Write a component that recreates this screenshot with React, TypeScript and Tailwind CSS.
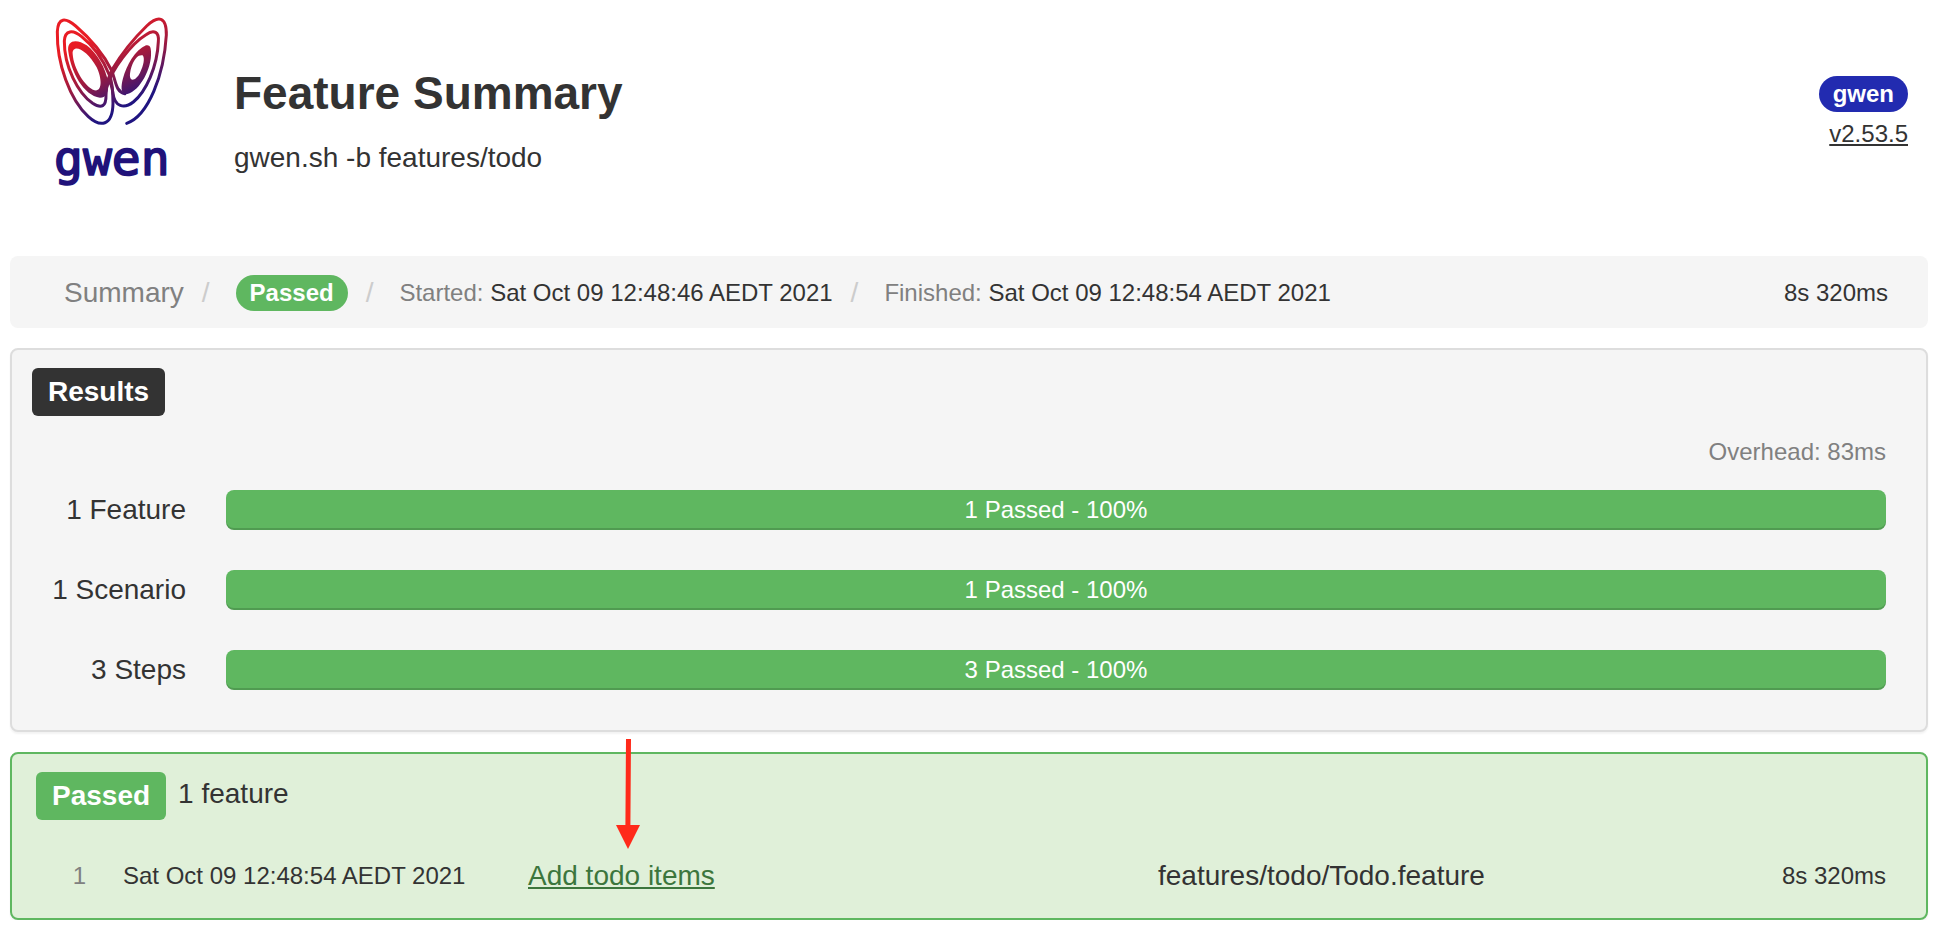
import React from "react";

function Logo() {
  return (
    <svg viewBox="0 0 450 600" className="h-[200px] w-[150px] shrink-0" role="img" aria-label="gwen logo">
      <defs>
        <linearGradient id="wing" gradientUnits="userSpaceOnUse" x1="120" y1="130" x2="225" y2="335">
          <stop offset="0" stopColor="#e91c24" />
          <stop offset="0.5" stopColor="#9c1a40" />
          <stop offset="1" stopColor="#1f1480" />
        </linearGradient>
      </defs>
      <g fill="none" stroke="url(#wing)" strokeWidth="9" strokeLinecap="round" strokeLinejoin="round">
        <path d="M260 370C325 348 372 225 379 105C380 48 354 46 320 78C285 112 245 160 217 208C200 240 200 260 198 285C199 320 184 327 158 310C115 280 72 200 73 123C75 90 98 88 125 110C160 138 190 180 208 225C218 250 218 270 219 310C218 380 180 382 145 350C90 300 50 190 52 95C54 52 76 52 107 78C150 115 192 165 214 210C228 240 225 275 255 281" />
        <path d="M200 262C214 208 275 130 318 104C342 87 358 96 355 125C352 200 318 275 280 306C252 328 224 320 219 280C216 262 212 248 206 236" />
      </g>
      <path fill="url(#wing)" fillRule="evenodd" d="M85 155C79 118 112 116 140 136C172 160 197 205 204 245C205 275 200 293 180 293C130 286 93 215 85 155ZM98 162C101 207 135 260 163 271C188 276 186 235 170 202C150 165 122 143 106 146C99 148 97 154 98 162Z" />
      <path fill="url(#wing)" fillRule="evenodd" d="M333 155C336 205 300 272 262 282C240 285 243 258 249 235C260 195 285 150 318 136C329 133 333 142 333 155ZM308 166C286 160 269 205 270 230C273 247 290 238 300 218C311 196 315 174 308 166Z" />
      <text x="42" y="525" fontSize="144" fontFamily="DejaVu Sans Mono, monospace" fill="#20127a" stroke="#20127a" strokeWidth="5" strokeLinejoin="round">gwen</text>
    </svg>
  );
}

const results = [
  { label: "1 Feature", value: "1 Passed - 100%" },
  { label: "1 Scenario", value: "1 Passed - 100%" },
  { label: "3 Steps", value: "3 Passed - 100%" },
];

function Slash() {
  return <span className="text-[28px] text-[#cccccc]" aria-hidden="true">/</span>;
}

export default function App() {
  return (
    <div className="bg-white pr-3 pl-[10px] font-['Liberation_Sans',Arial,sans-serif] text-[28px] leading-10 text-[#333333]">
      <header className="flex h-64 items-start pr-5 pl-[30px]">
        <Logo />
        <div className="ml-11 flex-1 pt-[66px]">
          <h1 className="text-[46px] leading-[54px] font-bold">Feature Summary</h1>
          <p className="mt-[18px]">gwen.sh -b features/todo</p>
        </div>
        <div className="flex flex-col items-end pt-[76px] text-[24px]">
          <span className="flex h-9 items-center rounded-full bg-[#222bb0] px-[14px] font-bold text-white">gwen</span>
          <a href="#version" className="mt-[2px] underline decoration-2 underline-offset-2">v2.53.5</a>
        </div>
      </header>

      <ul className="flex h-[72px] items-center rounded-lg bg-[#f5f5f5] pt-[2px] pr-10 pl-[54px] text-[24px]">
        <li className="mr-[18px] text-[28px] text-[#808080]">Summary</li>
        <li><Slash /></li>
        <li className="mr-[18px] ml-[26px] flex h-9 items-center rounded-full bg-[#5fb760] px-[14px] font-bold text-white">Passed</li>
        <li><Slash /></li>
        <li className="mr-[18px] ml-[26px]"><span className="text-[#808080]">Started:</span> Sat Oct 09 12:48:46 AEDT 2021</li>
        <li><Slash /></li>
        <li className="ml-[26px]"><span className="text-[#808080]">Finished:</span> Sat Oct 09 12:48:54 AEDT 2021</li>
        <li className="ml-auto">8s 320ms</li>
      </ul>

      <section className="mt-5 h-96 rounded-lg border-2 border-[#dddddd] bg-[#f5f5f5] pt-[18px] pr-10 pl-5 shadow-[0_2px_2px_rgba(0,0,0,0.05)]">
        <h2 className="flex h-12 w-fit items-center rounded-md bg-[#333333] px-4 font-bold text-white">Results</h2>
        <p className="mt-4 text-right text-[24px] text-[#808080]">Overhead: 83ms</p>
        <div className="mt-[18px] flex flex-col gap-10">
          {results.map((row) => (
            <div key={row.label} className="flex items-center">
              <span className="w-[154px] text-right">{row.label}</span>
              <div className="ml-10 flex h-10 flex-1 items-center justify-center rounded-lg bg-[#5fb760] text-[24px] text-white shadow-[inset_0_-2px_0_rgba(0,0,0,0.15)]">
                {row.value}
              </div>
            </div>
          ))}
        </div>
      </section>

      <section className="relative mt-5 h-[168px] rounded-lg border-2 border-[#5fb760] bg-[#e0f0d9] pt-[18px] pr-10 pl-6 shadow-[0_2px_2px_rgba(0,0,0,0.05)]">
        <div className="flex h-12 items-start gap-3">
          <h2 className="flex h-12 items-center rounded-md bg-[#5fb760] px-4 font-bold text-white">Passed</h2>
          <span className="pt-[2px]">1 feature</span>
        </div>
        <table className="mt-9 w-full table-fixed">
          <tbody>
            <tr>
              <td className="w-[50px] p-0 text-right text-[24px] text-[#808080]">1</td>
              <td className="w-[418px] p-0 pl-[37px] text-[24px]">Sat Oct 09 12:48:54 AEDT 2021</td>
              <td className="p-0 pl-6"><a href="#todo" className="text-[#3c763d] underline decoration-2 underline-offset-2">Add todo items</a></td>
              <td className="w-[400px] p-0">features/todo/Todo.feature</td>
              <td className="w-[328px] p-0 text-right text-[24px]">8s 320ms</td>
            </tr>
          </tbody>
        </table>
        <svg viewBox="0 0 26 112" className="absolute top-[-15px] left-[603px] h-28 w-[26px]" aria-hidden="true">
          <path d="M11 0h5l-.6 86h9.600L13 110 1 86h9.400Z" fill="#ff2a1a" />
        </svg>
      </section>
    </div>
  );
}
